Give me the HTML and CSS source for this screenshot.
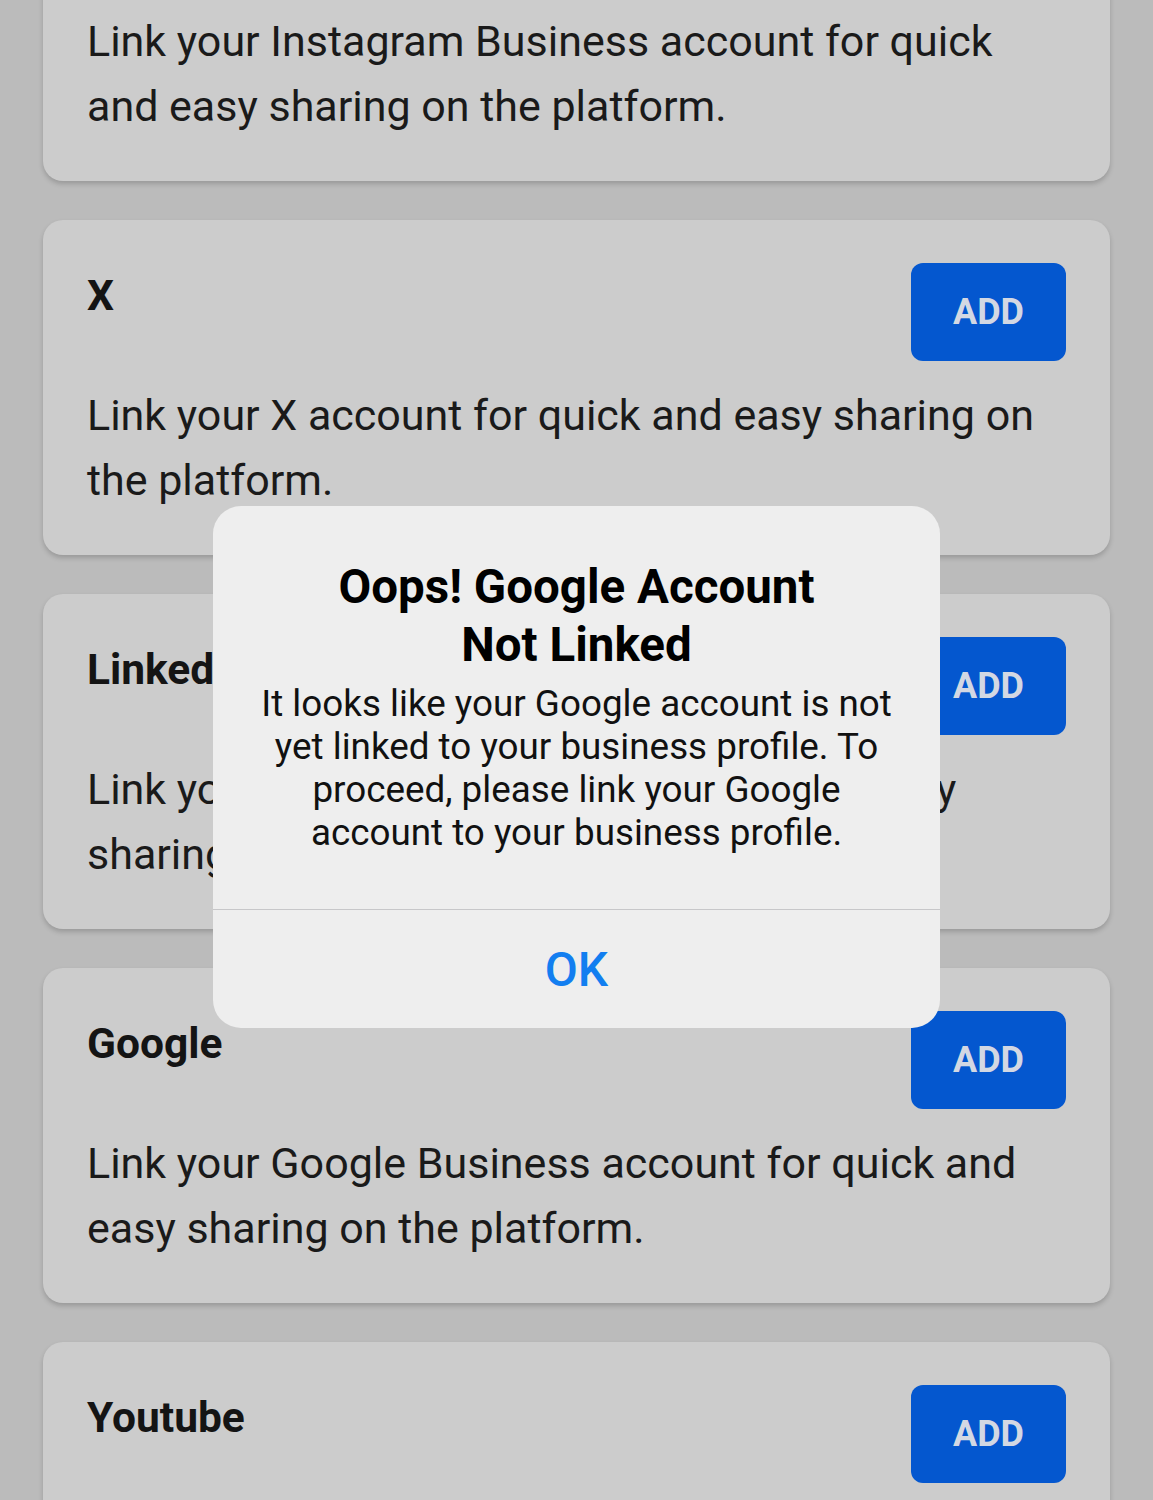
FILE: index.html
```html
<!DOCTYPE html>
<html lang="en">
<head>
<meta charset="utf-8">
<title>Link accounts</title>
<link rel="stylesheet" href="styles.css">
</head>
<body>
<main class="list">
  <section class="card">
    <div class="card-head">
      <h2 class="card-title">Instagram</h2>
      <button class="add-btn">ADD</button>
    </div>
    <p class="card-desc">Link your Instagram Business account for quick and easy sharing on the platform.</p>
  </section>
  <section class="card">
    <div class="card-head">
      <h2 class="card-title">X</h2>
      <button class="add-btn">ADD</button>
    </div>
    <p class="card-desc">Link your X account for quick and easy sharing on the platform.</p>
  </section>
  <section class="card">
    <div class="card-head">
      <h2 class="card-title">LinkedIn</h2>
      <button class="add-btn">ADD</button>
    </div>
    <p class="card-desc">Link your LinkedIn account for quick and easy sharing on the platform.</p>
  </section>
  <section class="card">
    <div class="card-head">
      <h2 class="card-title">Google</h2>
      <button class="add-btn">ADD</button>
    </div>
    <p class="card-desc">Link your Google Business account for quick and easy sharing on the platform.</p>
  </section>
  <section class="card">
    <div class="card-head">
      <h2 class="card-title">Youtube</h2>
      <button class="add-btn">ADD</button>
    </div>
    <p class="card-desc">Link your Youtube account for quick and easy sharing on the platform.</p>
  </section>
</main>

<div class="alert" role="alertdialog">
  <div class="alert-content">
    <h1 class="alert-title">Oops! Google Account Not Linked</h1>
    <p class="alert-msg">It looks like your Google account is not yet linked to your business profile. To proceed, please link your Google account to your business profile.</p>
  </div>
  <button class="alert-ok">OK</button>
</div>
</body>
</html>
```

FILE: styles.css
```css
html, body {
  margin: 0;
  padding: 0;
}
body {
  background: #bbbbbb;
  font-family: Roboto, "Noto Sans", sans-serif;
  color: #151515;
  overflow: hidden;
  height: 1500px;
}
.list {
  display: flex;
  flex-direction: column;
  gap: 39px;
  padding: 0 43px;
  margin-top: -154px;
}
.card {
  background: #cccccc;
  border-radius: 20px;
  padding: 43px 44px 42px 44px;
  box-shadow: 0 3px 5px rgba(0, 0, 0, 0.18);
  height: 335px;
  box-sizing: border-box;
}
.card-head {
  display: flex;
  justify-content: space-between;
  align-items: flex-start;
}
.card-title {
  margin: 8px 0 0 0;
  font-size: 42.5px;
  line-height: 50px;
  font-weight: 700;
  color: #141414;
}
.add-btn {
  width: 155px;
  height: 98px;
  border: none;
  border-radius: 12px;
  background: #0457cf;
  color: #d3d8e3;
  font-family: Roboto, "Noto Sans", sans-serif;
  font-weight: 700;
  font-size: 36px;
  padding: 0;
}
.card-desc {
  margin: 22px 0 0 0;
  font-size: 43px;
  line-height: 65px;
  color: #1a1a1a;
}
.alert {
  position: absolute;
  left: 213px;
  top: 506px;
  width: 727px;
  height: 522px;
  background: #eeeeee;
  border-radius: 28px;
  display: flex;
  flex-direction: column;
  overflow: hidden;
}
.alert-content {
  padding: 52px 38px 0 38px;
  height: 404px;
  box-sizing: border-box;
  border-bottom: 1px solid #c7c7c9;
  text-align: center;
}
.alert-title {
  margin: 0;
  font-size: 47.5px;
  line-height: 58px;
  font-weight: 700;
  color: #000;
  padding: 0 60px;
}
.alert-msg {
  margin: 8px 0 0 0;
  font-size: 36.8px;
  line-height: 43px;
  color: #111;
}
.alert-ok {
  flex: 1;
  border: none;
  background: transparent;
  color: #127ef0;
  font-family: Roboto, "Noto Sans", sans-serif;
  font-size: 48px;
  font-weight: 500;
  padding: 0;
}
```
